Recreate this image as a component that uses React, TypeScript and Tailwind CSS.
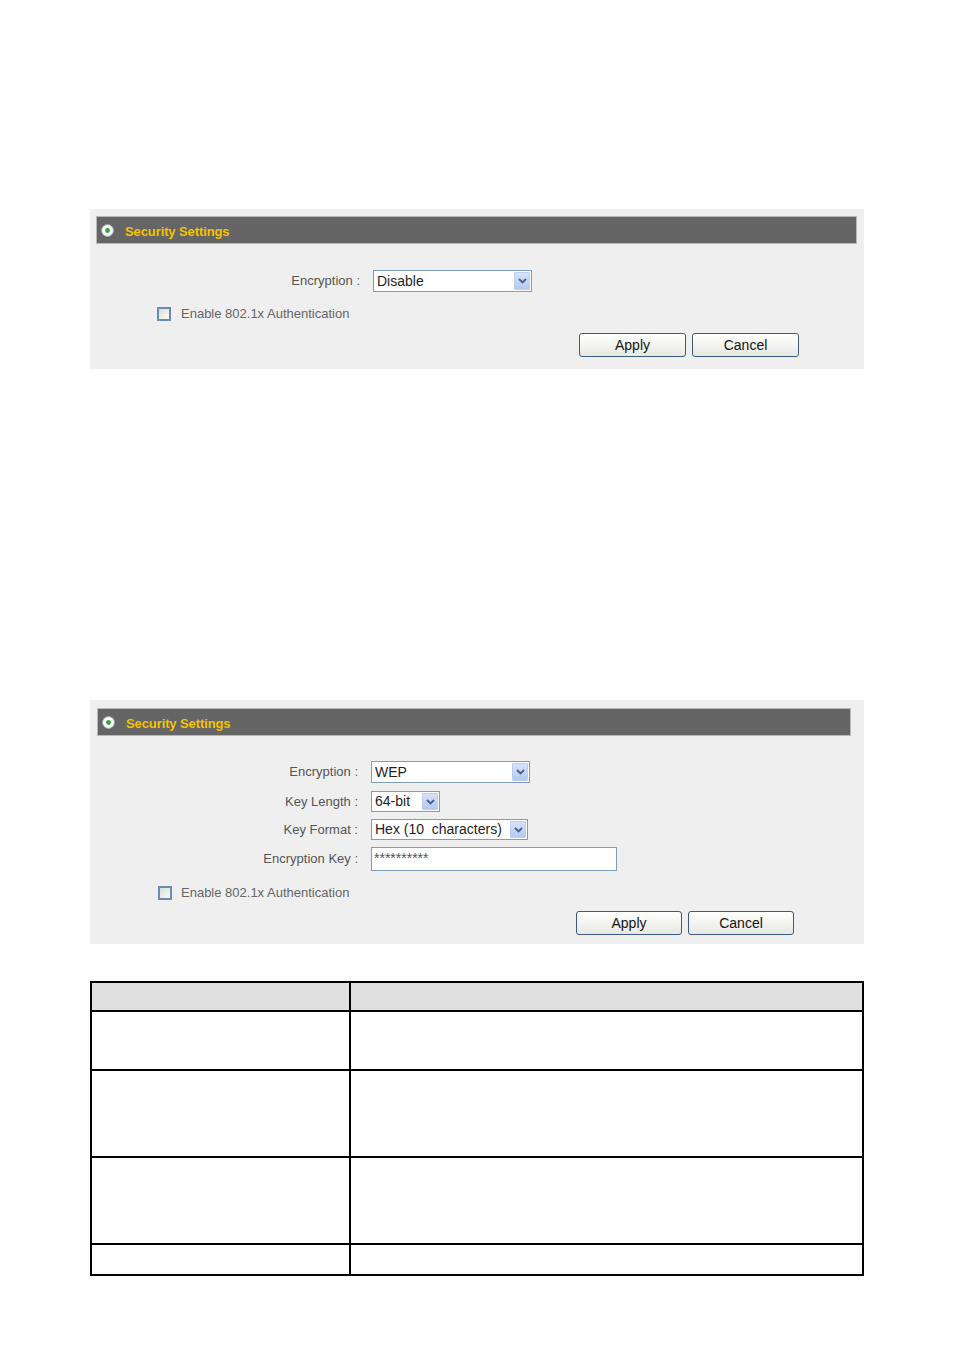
import React from "react";

const font = { fontFamily: '"Liberation Sans", Arial, sans-serif' };

function RadioIcon() {
  return (
    <svg width="13" height="13" viewBox="0 0 13 13" className="shrink-0">
      <circle cx="6.5" cy="6.5" r="6" fill="#f4f6f8" stroke="#9aa4ae" strokeWidth="1" />
      <circle cx="6.5" cy="6.5" r="4.3" fill="#ffffff" />
      <circle cx="6.5" cy="6.5" r="2.4" fill="#2fa53a" />
    </svg>
  );
}

function Header() {
  return (
    <div className="h-[28px] bg-[#656565] border border-[#b8b8b8] flex items-center pl-[4px]">
      <RadioIcon />
      <span className="ml-[11px] mt-[4px] text-[13px] font-bold text-[#f3c300] tracking-[-0.1px]">Security Settings</span>
    </div>
  );
}

function Arrow() {
  return (
    <div className="w-[16px] self-stretch my-[1px] mr-[1px] bg-gradient-to-b from-[#d6e2fb] to-[#b4c9f3] border border-[#bccdf0] rounded-[1px] flex items-center justify-center">
      <svg width="9" height="6" viewBox="0 0 9 6">
        <path d="M1 1 L4.5 4.5 L8 1" fill="none" stroke="#4b5e86" strokeWidth="1.8" />
      </svg>
    </div>
  );
}

function Select({ w, h = 22, text }: { w: number; h?: number; text: string }) {
  return (
    <div
      className="border border-[#7f9db9] bg-white flex items-stretch"
      style={{ width: w, height: h }}
    >
      <div className="flex-1 flex items-center pl-[3px] text-[14px] text-[#1e1e1e] whitespace-pre">{text}</div>
      <Arrow />
    </div>
  );
}

function Checkbox() {
  return (
    <div className="w-[14px] h-[14px] border-[2px] border-[#6a8cb3] bg-gradient-to-br from-[#dcdcd6] to-[#fbfbf9] shrink-0" />
  );
}

function Btn({ label, w }: { label: string; w: number }) {
  return (
    <div
      className="h-[24px] border border-[#3d5b82] rounded-[3px] bg-gradient-to-b from-[#ffffff] to-[#e8e8e2] flex items-center justify-center text-[14px] text-[#141414]"
      style={{ width: w }}
    >
      {label}
    </div>
  );
}

function Row({ label, labelW, children, className = "" }: { label: string; labelW: number; children: React.ReactNode; className?: string }) {
  return (
    <div className={"flex items-center " + className}>
      <div className="text-right text-[13px] text-[#555555] shrink-0 whitespace-nowrap" style={{ width: labelW }}>
        {label}
      </div>
      <div className="ml-[13px]">{children}</div>
    </div>
  );
}

export default function App() {
  return (
    <div className="w-[955px] h-[1350px] bg-white overflow-hidden" style={font}>
      <div className="ml-[90px] w-[774px] pt-[209px]">
        {/* Panel 1 */}
        <div className="bg-[#efefef] pt-[7px] pl-[6px] pr-[7px] h-[160px]">
          <Header />
          <Row label="Encryption :" labelW={264} className="mt-[26px]">
            <Select w={159} text="Disable" />
          </Row>
          <div className="flex items-center mt-[14px] ml-[61px] h-[15px]">
            <Checkbox />
            <span className="ml-[10px] text-[13px] text-[#666666] whitespace-nowrap">Enable 802.1x Authentication</span>
          </div>
          <div className="flex mt-[12px] ml-[483px] gap-[6px]">
            <Btn label="Apply" w={107} />
            <Btn label="Cancel" w={107} />
          </div>
        </div>

        {/* Panel 2 */}
        <div className="mt-[331px] bg-[#efefef] pt-[8px] pl-[7px] pr-[13px] h-[244px]">
          <Header />
          <Row label="Encryption :" labelW={261} className="mt-[25px]">
            <Select w={159} text="WEP" />
          </Row>
          <Row label="Key Length :" labelW={261} className="mt-[8px]">
            <Select w={69} h={21} text="64-bit" />
          </Row>
          <Row label="Key Format :" labelW={261} className="mt-[7px]">
            <Select w={157} h={21} text="Hex (10  characters)" />
          </Row>
          <Row label="Encryption Key :" labelW={261} className="mt-[7px]">
            <div className="w-[246px] h-[24px] border border-[#7f9db9] bg-white text-[14px] leading-none text-[#555] pl-[2px] pt-[3px]">
              **********
            </div>
          </Row>
          <div className="flex items-center mt-[14px] ml-[61px] h-[15px]">
            <Checkbox />
            <span className="ml-[9px] text-[13px] text-[#666666] whitespace-nowrap">Enable 802.1x Authentication</span>
          </div>
          <div className="flex mt-[11px] ml-[479px] gap-[6px]">
            <Btn label="Apply" w={106} />
            <Btn label="Cancel" w={106} />
          </div>
        </div>

        {/* Table */}
        <div className="mt-[37px] border-[2px] border-black grid grid-cols-[259px_1fr] grid-rows-[29px_59px_87px_87px_29px]">
          <div className="bg-[#e0e0e0] border-r-[2px] border-b-[2px] border-black" />
          <div className="bg-[#e0e0e0] border-b-[2px] border-black" />
          <div className="border-r-[2px] border-b-[2px] border-black" />
          <div className="border-b-[2px] border-black" />
          <div className="border-r-[2px] border-b-[2px] border-black" />
          <div className="border-b-[2px] border-black" />
          <div className="border-r-[2px] border-b-[2px] border-black" />
          <div className="border-b-[2px] border-black" />
          <div className="border-r-[2px] border-black" />
          <div />
        </div>
      </div>
    </div>
  );
}
